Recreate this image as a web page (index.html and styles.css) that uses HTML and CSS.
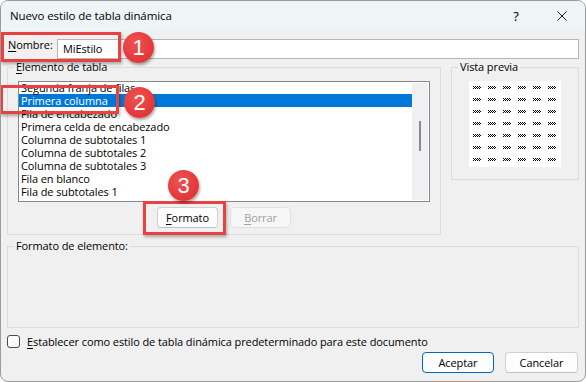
FILE: index.html
```html
<!DOCTYPE html>
<html lang="es">
<head>
<meta charset="utf-8">
<title>Nuevo estilo de tabla dinámica</title>
<link rel="stylesheet" href="styles.css">
</head>
<body>
<div class="dialog">
  <div class="titlebar">
    <span class="title">Nuevo estilo de tabla dinámica</span>
    <span class="tb-btn help">?</span>
    <span class="tb-btn close"><svg width="10" height="10" viewBox="0 0 10 10"><path d="M0.5 0.5L9.5 9.5M9.5 0.5L0.5 9.5" stroke="#1a1a1a" stroke-width="1" fill="none"/></svg></span>
  </div>
  <div class="content">
    <div class="name-row">
      <span class="name-label"><u>N</u>ombre:</span>
      <div class="input">MiEstilo</div>
    </div>
    <div class="groups">
      <fieldset class="group elem">
        <legend><u>E</u>lemento de tabla</legend>
        <div class="listbox">
          <div class="items">
            <div class="item">Segunda franja de filas</div>
            <div class="item selected">Primera columna</div>
            <div class="item">Fila de encabezado</div>
            <div class="item">Primera celda de encabezado</div>
            <div class="item">Columna de subtotales 1</div>
            <div class="item">Columna de subtotales 2</div>
            <div class="item">Columna de subtotales 3</div>
            <div class="item">Fila en blanco</div>
            <div class="item">Fila de subtotales 1</div>
          </div>
          <div class="scrollbar"><div class="thumb"></div></div>
        </div>
        <div class="elem-btns">
          <span class="btn small"><u>F</u>ormato</span>
          <span class="btn small disabled"><u>B</u>orrar</span>
        </div>
      </fieldset>
      <fieldset class="group preview">
        <legend>Vista previa</legend>
        <div class="preview-box">
          <svg width="92" height="86" viewBox="0 0 92 86">
            <defs>
              <pattern id="chk" width="2" height="2" patternUnits="userSpaceOnUse">
                <rect x="0" y="0" width="1" height="1" fill="#000"/>
                <rect x="1" y="1" width="1" height="1" fill="#000"/>
              </pattern>
              <pattern id="cell" x="4" y="5" width="15" height="12" patternUnits="userSpaceOnUse">
                <rect x="0" y="0" width="8" height="3" fill="url(#chk)"/>
              </pattern>
            </defs>
            <rect x="0" y="0" width="92" height="86" fill="url(#cell)"/>
          </svg>
        </div>
      </fieldset>
    </div>
    <fieldset class="group format">
      <legend>Formato de elemento:</legend>
      <div class="format-body"></div>
    </fieldset>
    <div class="check-row">
      <span class="checkbox"></span>
      <span class="check-label"><u>E</u>stablecer como estilo de tabla dinámica predeterminado para este documento</span>
    </div>
    <div class="footer">
      <span class="btn default">Aceptar</span>
      <span class="btn cancel">Cancelar</span>
    </div>
  </div>

  <div class="mark mark1"></div>
  <div class="mark mark2"></div>
  <div class="mark mark3"></div>
  <div class="badge badge1">1</div>
  <div class="badge badge2">2</div>
  <div class="badge badge3">3</div>
</div>
</body>
</html>
```

FILE: styles.css
```css
* { box-sizing: border-box; }
html, body { margin: 0; padding: 0; background: #ffffff; }
body {
  font-family: "Open Sans", "Noto Sans", sans-serif;
  font-size: 11px;
  letter-spacing: -0.1px;
  color: #000;
}
u { text-decoration: underline; text-underline-offset: 2px; }

.dialog {
  position: relative;
  width: 586px;
  height: 382px;
  border: 1px solid #9a9a9a;
  border-radius: 8px;
  background: #f0f0f0;
  overflow: hidden;
}

.titlebar {
  height: 29px;
  background: #eef5f7;
  display: flex;
  align-items: center;
  padding-left: 9px;
}
.title { flex: 1; font-size: 11.5px; }
.tb-btn {
  width: 46px;
  height: 29px;
  display: flex;
  align-items: center;
  justify-content: center;
}
.help { font-size: 13px; }

.content { padding: 0 6px; }

.name-row {
  display: flex;
  align-items: flex-start;
  margin-top: 9px;
}
.name-label {
  width: 50px;
  margin-top: -1px;
  padding-left: 1px;
  line-height: 14px;
}
.input {
  flex: 1;
  height: 20px;
  background: #fff;
  border: 1px solid #b5b5b5;
  padding: 0 5px;
  line-height: 18px;
}

.groups {
  display: flex;
  align-items: flex-start;
  gap: 10px;
  margin-top: 1px;
}
.group {
  margin: 0;
  padding: 0;
  min-width: 0;
  border: 1px solid #dcdcdc;
}
.group legend {
  margin-left: 6px;
  padding: 0 2px;
  line-height: 14px;
}

.elem { width: 434px; padding: 7px 0 6px; }
.listbox {
  margin: 0 10px;
  height: 121px;
  border: 1px solid #828790;
  background: #fff;
  display: flex;
  overflow: hidden;
}
.items { flex: 1; margin-top: -1px; }
.item { height: 13px; line-height: 13px; padding-left: 2px; white-space: nowrap; }
.item.selected { background: #0078d7; color: #fff; }
.scrollbar {
  width: 16px;
  margin: 1px 1px 1px 0;
  background: #f0f0f0;
  position: relative;
}
.thumb {
  width: 2px;
  height: 30px;
  background: #8a8a8a;
  margin: 38px 0 0 7px;
}
.elem-btns {
  display: flex;
  justify-content: center;
  gap: 12px;
  margin-top: 5px;
}

.btn {
  display: flex;
  align-items: center;
  justify-content: center;
  height: 21px;
  background: #fdfdfd;
  border: 1px solid #d0d0d0;
  border-bottom-color: #c0c0c0;
  border-radius: 4px;
}
.btn.small { width: 61px; }
.btn.disabled { color: #a0a0a0; border-color: #e0e0e0; background: #f6f6f6; }

.preview { width: 128px; padding: 7px 0 12px; }
.preview-box { width: 92px; height: 86px; margin: 0 auto; background: #fff; }
.preview-box svg { display: block; }

.format { width: 572px; margin-top: 4px; }
.format-body { height: 74px; }

.check-row {
  display: flex;
  align-items: center;
  gap: 7px;
  margin-top: 7px;
  height: 13px;
}
.checkbox {
  width: 13px;
  height: 13px;
  border: 1px solid #4a4a4a;
  border-radius: 3px;
  background: #fbfbfb;
}
.check-label { line-height: 13px; }

.footer {
  display: flex;
  justify-content: flex-end;
  gap: 11px;
  margin-top: 4px;
  padding-right: 1px;
}
.btn.default { width: 72px; border-color: #0067c0; }
.btn.cancel { width: 73px; }

/* annotations */
.mark {
  position: absolute;
  border: 3px solid #e8413f;
  box-shadow: 1px 2px 3px rgba(0,0,0,0.3);
}
.mark1 { left: 0; top: 31px; width: 120px; height: 30px; }
.mark2 { left: -1px; top: 84px; width: 119px; height: 29px; }
.mark3 { left: 142px; top: 200px; width: 83px; height: 34px; }

.badge {
  position: absolute;
  width: 31px;
  height: 31px;
  border-radius: 50%;
  background: radial-gradient(circle at 40% 35%, #f0524f 0%, #e53a3d 60%, #d8302f 100%);
  box-shadow: 1px 2px 3px rgba(0,0,0,0.35);
  color: #fff;
  font-family: "Liberation Sans", Arial, sans-serif;
  font-size: 22px;
  letter-spacing: 0;
  line-height: 31px;
  text-align: center;
}
.badge1 { left: 122px; top: 31px; }
.badge2 { left: 123px; top: 86px; }
.badge3 { left: 167px; top: 169px; }
```
